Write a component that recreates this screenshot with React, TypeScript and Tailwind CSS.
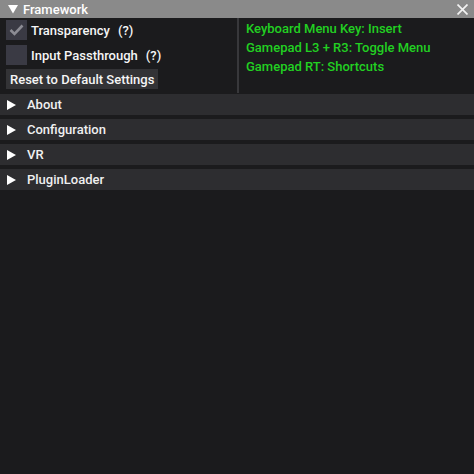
import React from "react";

const TriDown = () => (
  <svg width="10" height="9" viewBox="0 0 10 9" className="shrink-0">
    <polygon points="0,0 10,0 5,8.5" fill="#ffffff" />
  </svg>
);

const TriRight = () => (
  <svg width="9" height="10" viewBox="0 0 9 10" className="shrink-0">
    <polygon points="0,0 9,5 0,10" fill="#ffffff" />
  </svg>
);

const Header = ({ label }: { label: string }) => (
  <div className="h-[21px] w-full bg-[#2d2d30] flex items-center pl-[7px]">
    <TriRight />
    <span className="ml-[11px] text-[13px] leading-none text-[#f0f0f0]">{label}</span>
  </div>
);

export default function App() {
  return (
    <div
      className="w-[474px] h-[474px] bg-[#1b1b1d] overflow-hidden font-medium"
      style={{ fontFamily: "Roboto, 'Noto Sans', sans-serif" }}
    >
      {/* title bar */}
      <div className="h-[18px] bg-[#8a8a8a] flex items-center pl-[8px] pr-[6px]">
        <TriDown />
        <span className="ml-[5px] text-[13px] leading-none text-white">Framework</span>
        <div className="flex-1" />
        <svg width="11" height="11" viewBox="0 0 11 11" className="shrink-0">
          <path d="M0.5 0.5 L10.5 10.5 M10.5 0.5 L0.5 10.5" stroke="#f2f2f2" strokeWidth="1.7" />
        </svg>
      </div>

      {/* top table */}
      <div className="flex h-[75px]">
        <div className="w-[237px] pl-[6px] pt-[2px] flex flex-col gap-[4px]">
          <div className="flex items-center h-[20px]">
            <div className="w-[21px] h-[20px] bg-[#3a3a44] flex items-center justify-center">
              <svg width="15" height="12" viewBox="0 0 15 12">
                <path d="M1.5 6 L5.5 10 L13.5 1.5" stroke="#8c8c94" strokeWidth="2.6" fill="none" />
              </svg>
            </div>
            <span className="ml-[4px] text-[13px] leading-none text-[#f5f5f5]">Transparency</span>
            <span className="ml-[8px] text-[13px] leading-none text-[#f5f5f5]">(?)</span>
          </div>
          <div className="flex items-center h-[20px] mt-[1px]">
            <div className="w-[21px] h-[20px] bg-[#3a3a44]" />
            <span className="ml-[4px] text-[13px] leading-none text-[#f5f5f5]">Input Passthrough</span>
            <span className="ml-[8px] text-[13px] leading-none text-[#f5f5f5]">(?)</span>
          </div>
          <div className="flex">
            <div className="h-[20px] px-[4px] bg-[#333336] flex items-center text-[13px] leading-none text-[#f5f5f5]">
              Reset to Default Settings
            </div>
          </div>
        </div>
        <div className="w-[2px] bg-[#38383b]" />
        <div className="flex-1 pl-[7px] pt-[1px] flex flex-col text-[13px] text-[#22d022] leading-[19px]">
          <span>Keyboard Menu Key: Insert</span>
          <span>Gamepad L3 + R3: Toggle Menu</span>
          <span>Gamepad RT: Shortcuts</span>
        </div>
      </div>

      {/* collapsing headers */}
      <div className="mt-[1px] flex flex-col gap-[4px]">
        <Header label="About" />
        <Header label="Configuration" />
        <Header label="VR" />
        <Header label="PluginLoader" />
      </div>
    </div>
  );
}
